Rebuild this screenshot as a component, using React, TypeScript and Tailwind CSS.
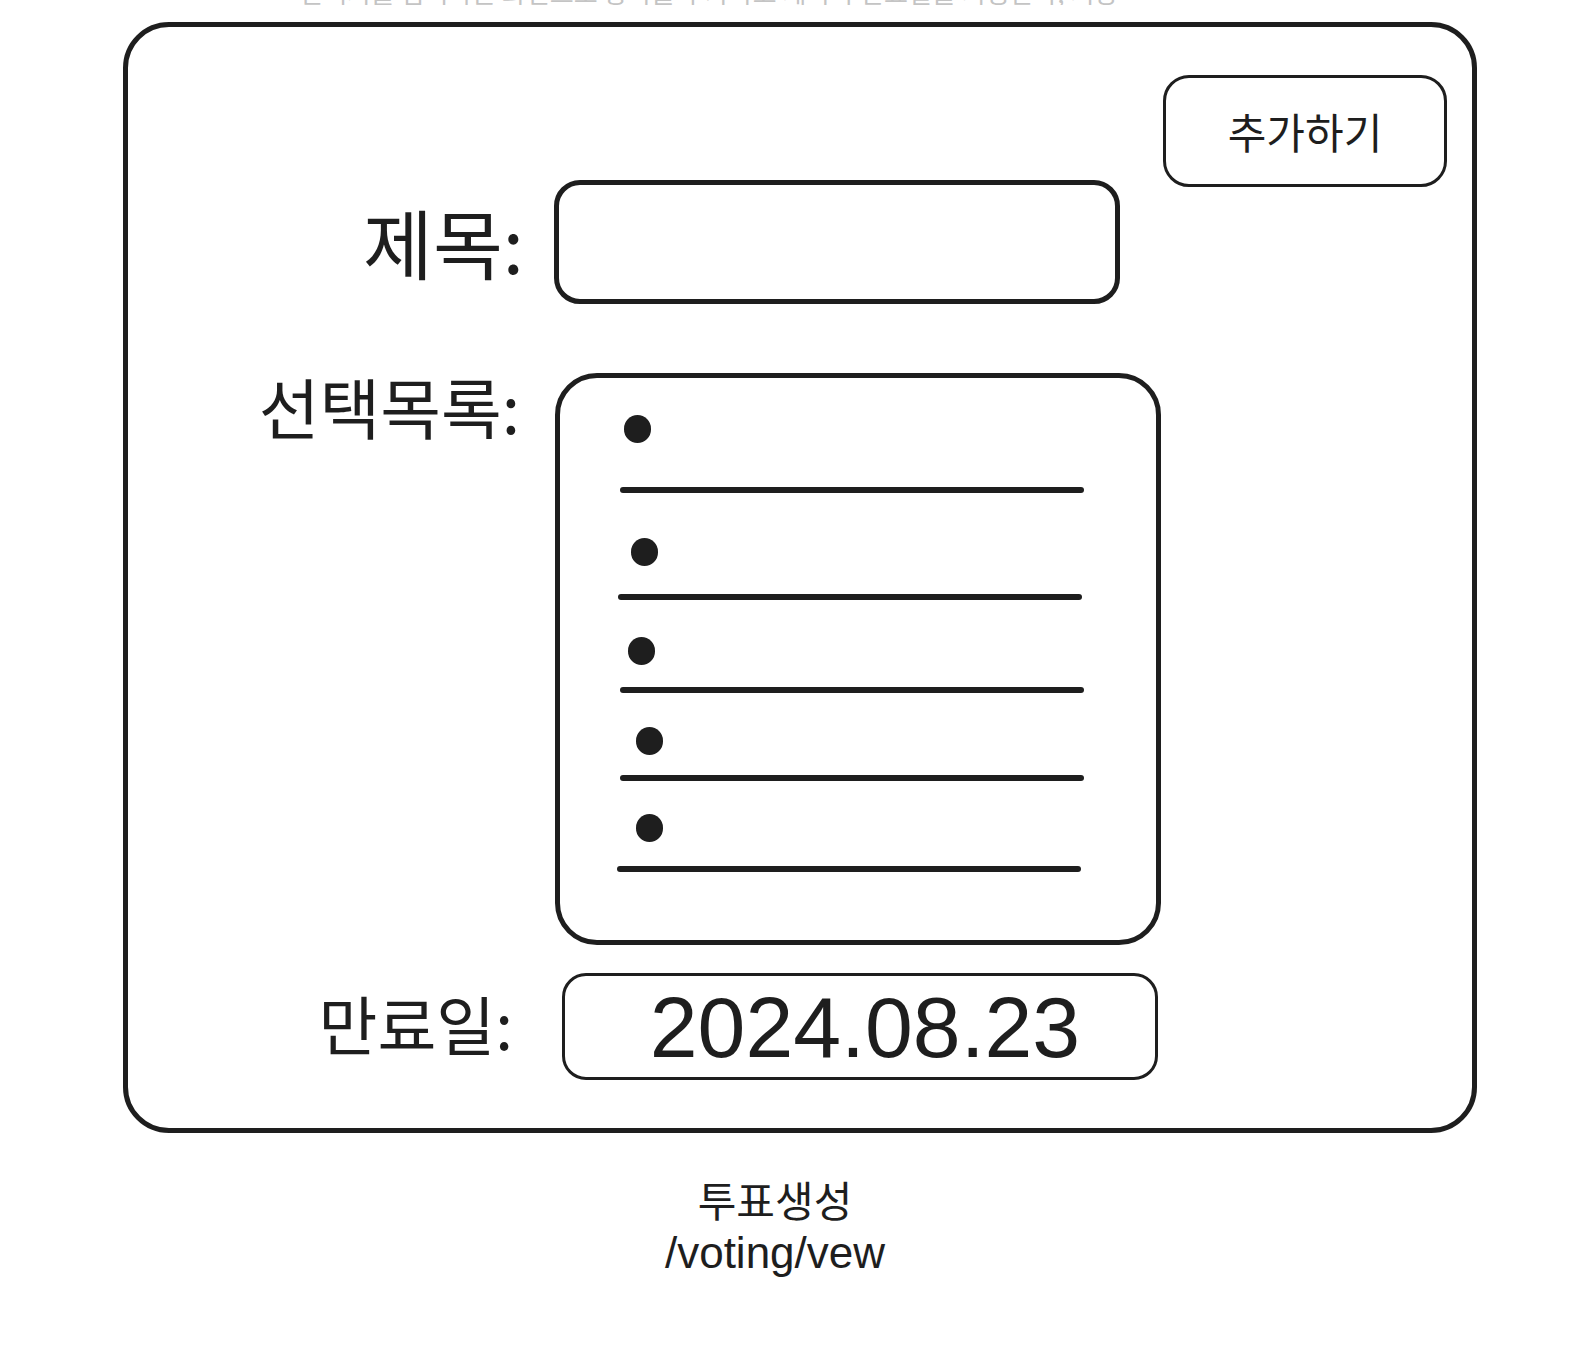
const KR = "font-['Noto_Sans_CJK_KR','Noto_Sans',sans-serif]"

// hand-drawn list rows: bullet offset + line offset inside the options box
const ROWS = [
  { bullet: 'mt-[37px] ml-[64px]', line: 'mt-[44px] ml-[60px]' },
  { bullet: 'mt-[45px] ml-[71px]', line: 'mt-[28px] ml-[58px]' },
  { bullet: 'mt-[37px] ml-[68px]', line: 'mt-[22px] ml-[60px]' },
  { bullet: 'mt-[34px] ml-[76px]', line: 'mt-[20px] ml-[60px]' },
  { bullet: 'mt-[33px] ml-[76px]', line: 'mt-[24px] ml-[57px]' },
]

export default function App() {
  return (
    <div className={`w-[1590px] min-h-[1358px] bg-white text-[#1e1e1e] ${KR}`}>
      {/* cut-off note above the frame */}
      <div className="h-[5px] overflow-hidden flex items-end pl-[299px]">
        <span className="text-[26px] leading-none text-[#c4c4c4] whitespace-nowrap">
          선택지를 입력하는 화면으로 항목을 추가하고 제목과 만료일을 지정한다, 저장
        </span>
      </div>

      <div className="ml-[123px] mt-[17px] w-[1354px] h-[1111px] border-[5px] border-[#1e1e1e] rounded-[46px] flex flex-col">
        <div className="flex justify-end pr-[25px] pt-[48px]">
          <button className="w-[284px] h-[112px] border-[3px] border-[#1e1e1e] rounded-[26px] text-[42px] leading-none">
            추가하기
          </button>
        </div>

        {/* 제목 */}
        <div className="flex items-center -mt-[7px]">
          <div className="w-[396px] text-right text-[76px] leading-none -mt-[2px]">제목:</div>
          <div className="ml-[30px] w-[566px] h-[124px] border-[5px] border-[#1e1e1e] rounded-[26px]" />
        </div>

        {/* 선택목록 */}
        <div className="flex items-start mt-[69px]">
          <div className="w-[392px] text-right text-[66px] leading-none -mt-[1px]">선택목록:</div>
          <div className="ml-[35px] w-[606px] h-[572px] border-[5px] border-[#1e1e1e] rounded-[42px] flex flex-col">
            {ROWS.map((r, i) => (
              <div key={i} className="flex flex-col">
                <div className={`w-[27px] h-[28px] rounded-full bg-[#1e1e1e] ${r.bullet}`} />
                <div className={`w-[464px] h-[6px] rounded-full bg-[#1e1e1e] ${r.line}`} />
              </div>
            ))}
          </div>
        </div>

        {/* 만료일 */}
        <div className="flex items-center mt-[28px]">
          <div className="w-[385px] text-right text-[64px] leading-none -mt-[10px]">만료일:</div>
          <div className="ml-[49px] w-[596px] h-[107px] border-[3px] border-[#1e1e1e] rounded-[24px] flex items-center justify-center">
            <span className="font-['Liberation_Sans',Arial,sans-serif] text-[86px] leading-none pl-[10px]">2024.08.23</span>
          </div>
        </div>
      </div>

      <div className="pr-[40px] pt-[39px] text-center text-[42px] leading-[54px]">
        <div>투표생성</div>
        <div className="font-['Liberation_Sans',Arial,sans-serif] text-[44px]">/voting/vew</div>
      </div>
    </div>
  )
}
